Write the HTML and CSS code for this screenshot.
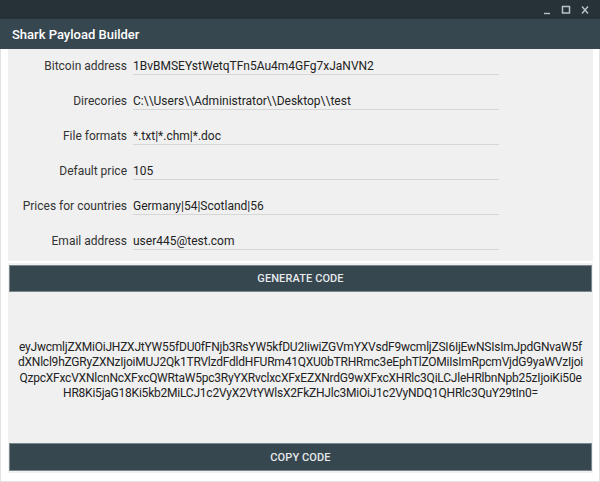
FILE: index.html
```html
<!DOCTYPE html>
<html>
<head>
<meta charset="utf-8">
<link rel="stylesheet" href="styles.css">
</head>
<body>
<div class="window">
  <div class="topbar">
    <svg class="ctl" width="10" height="10" viewBox="0 0 10 10"><path d="M2 8.5h6" stroke="#b9c2c6" stroke-width="1.4"/></svg>
    <svg class="ctl" width="10" height="10" viewBox="0 0 10 10"><rect x="1.5" y="1.5" width="7" height="6.5" fill="none" stroke="#b9c2c6" stroke-width="1.5"/></svg>
    <svg class="ctl" width="10" height="10" viewBox="0 0 10 10"><path d="M2 1.5l6 7M8 1.5l-6 7" stroke="#b9c2c6" stroke-width="1.4"/></svg>
  </div>
  <div class="titlebar">Shark Payload Builder</div>
  <div class="content">
    <div class="form-panel">
      <div class="row"><label class="lbl">Bitcoin address</label><input class="field" type="text" value="1BvBMSEYstWetqTFn5Au4m4GFg7xJaNVN2"></div>
      <div class="row"><label class="lbl">Direcories</label><input class="field" type="text" value="C:\\Users\\Administrator\\Desktop\\test"></div>
      <div class="row"><label class="lbl">File formats</label><input class="field" type="text" value="*.txt|*.chm|*.doc"></div>
      <div class="row"><label class="lbl">Default price</label><input class="field" type="text" value="105"></div>
      <div class="row"><label class="lbl">Prices for countries</label><input class="field" type="text" value="Germany|54|Scotland|56"></div>
      <div class="row"><label class="lbl">Email address</label><input class="field" type="text" value="user445@test.com"></div>
    </div>
    <div class="code-panel">
      <button class="btn">GENERATE CODE</button>
      <div class="code-area">
        <p class="code">eyJwcmljZXMiOiJHZXJtYW55fDU0fFNjb3RsYW5kfDU2IiwiZGVmYXVsdF9wcmljZSI6IjEwNSIsImJpdGNvaW5f<br>dXNlcl9hZGRyZXNzIjoiMUJ2Qk1TRVlzdFdldHFURm41QXU0bTRHRmc3eEphTlZOMiIsImRpcmVjdG9yaWVzIjoi<br>QzpcXFxcVXNlcnNcXFxcQWRtaW5pc3RyYXRvclxcXFxEZXNrdG9wXFxcXHRlc3QiLCJleHRlbnNpb25zIjoiKi50e<br>HR8Ki5jaG18Ki5kb2MiLCJ1c2VyX2VtYWlsX2FkZHJlc3MiOiJ1c2VyNDQ1QHRlc3QuY29tIn0=</p>
      </div>
      <button class="btn btn-copy">COPY CODE</button>
    </div>
  </div>
</div>
</body>
</html>
```

FILE: styles.css
```css
* { box-sizing: border-box; }
html, body { margin: 0; padding: 0; background: #ffffff; }
body { font-family: Roboto, "Liberation Sans", sans-serif; }

.window {
  width: 600px;
  height: 482px;
  border: 1px solid #e2e2e2;
  border-top: none;
  display: flex;
  flex-direction: column;
}

.topbar {
  height: 19px;
  background: #263238;
  display: flex;
  justify-content: flex-end;
  align-items: center;
  gap: 9px;
  padding-right: 10px;
  margin: 0 -1px;
}
.ctl { display: block; }

.titlebar {
  height: 30px;
  background: #37474f;
  color: #ffffff;
  font-size: 13px;
  font-weight: 500;
  display: flex;
  align-items: center;
  padding-left: 12px;
  margin: 0 -1px;
}

.content {
  flex: 1;
  padding: 0 6px 8px 7px;
  display: flex;
  flex-direction: column;
}

.form-panel {
  height: 212px;
  background: #f0f0f0;
  padding: 10px 0 11px;
  display: flex;
  flex-direction: column;
  gap: 19px;
}

.row {
  display: grid;
  grid-template-columns: 119px 366px;
  column-gap: 6px;
  align-items: end;
}

.lbl {
  text-align: right;
  font-size: 12px;
  line-height: 14px;
  color: #333333;
  padding-bottom: 2px;
}

.field {
  font-family: Roboto, "Liberation Sans", sans-serif;
  font-size: 12px;
  line-height: 14px;
  height: 16px;
  color: #222222;
  background: transparent;
  border: none;
  border-bottom: 1px solid #d6d6d6;
  padding: 0 0 1px 0;
  margin: 0;
  outline: none;
}

.code-panel {
  margin-top: 2px;
  flex: 1;
  background: #f0f0f0;
  padding: 2px 1px;
  display: flex;
  flex-direction: column;
}

.btn {
  height: 27px;
  background: #37474f;
  border: 1px solid #7b878c;
  color: #e6eaec;
  font-family: Roboto, "Liberation Sans", sans-serif;
  font-size: 11px;
  font-weight: 500;
  letter-spacing: 0.1px;
  padding: 0;
  margin: 0;
}
.btn-copy { height: 28px; }

.code-area {
  flex: 1;
  display: flex;
  align-items: center;
  justify-content: center;
  padding-top: 6px;
}

.code {
  margin: 0;
  text-align: center;
  font-size: 12px;
  line-height: 15.3px;
  letter-spacing: -0.22px;
  color: #222222;
  white-space: nowrap;
}
```
